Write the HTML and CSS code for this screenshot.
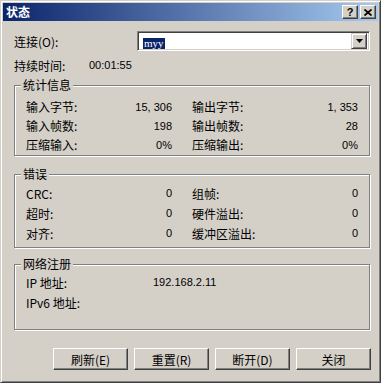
FILE: index.html
```html
<!DOCTYPE html>
<html>
<head lang="zh">
    <meta charset="UTF-8">
    <title>状态</title>
    <link rel="stylesheet" href="styles.css">
</head>
<body>
<div class="dialog">
    <div class="titlebar">
        <span class="title">状态</span>
        <div class="caption-btns">
            <span class="cap-btn help">?</span>
            <span class="cap-btn close">
                <svg width="8" height="7" viewBox="0 0 8 7">
                    <path d="M0.5 0.5 L7.5 6.5 M7.5 0.5 L0.5 6.5" stroke="#000" stroke-width="1.7" fill="none"/>
                </svg>
            </span>
        </div>
    </div>

    <div class="content">
        <div class="conn-row">
            <span class="conn-label">连接(O):</span>
            <div class="combo">
                <span class="combo-text"><span class="sel">myy</span></span>
                <span class="combo-btn">
                    <svg width="7" height="4" viewBox="0 0 7 4"><polygon points="0,0 7,0 3.5,4" fill="#000"/></svg>
                </span>
            </div>
        </div>

        <div class="dur-row">
            <span class="dur-label">持续时间:</span>
            <span class="num">00:01:55</span>
        </div>

        <!-- 统计信息 -->
        <fieldset class="group stats">
            <legend>统计信息</legend>
            <div class="grid">
                <div class="cell"><span>输入字节:</span><span class="num">15, 306</span></div>
                <div class="cell"><span>输出字节:</span><span class="num">1, 353</span></div>
                <div class="cell"><span>输入帧数:</span><span class="num">198</span></div>
                <div class="cell"><span>输出帧数:</span><span class="num">28</span></div>
                <div class="cell"><span>压缩输入:</span><span class="num">0%</span></div>
                <div class="cell"><span>压缩输出:</span><span class="num">0%</span></div>
            </div>
        </fieldset>

        <!-- 错误 -->
        <fieldset class="group errors">
            <legend>错误</legend>
            <div class="grid">
                <div class="cell"><span>CRC:</span><span class="num">0</span></div>
                <div class="cell"><span>组帧:</span><span class="num">0</span></div>
                <div class="cell"><span>超时:</span><span class="num">0</span></div>
                <div class="cell"><span>硬件溢出:</span><span class="num">0</span></div>
                <div class="cell"><span>对齐:</span><span class="num">0</span></div>
                <div class="cell"><span>缓冲区溢出:</span><span class="num">0</span></div>
            </div>
        </fieldset>

        <!-- 网络注册 -->
        <fieldset class="group net">
            <legend>网络注册</legend>
            <div class="net-grid">
                <span>IP 地址:</span><span class="num">192.168.2.11</span>
                <span>IPv6 地址:</span><span></span>
            </div>
        </fieldset>

        <div class="buttons">
            <button class="btn">刷新(E)</button>
            <button class="btn">重置(R)</button>
            <button class="btn">断开(D)</button>
            <button class="btn">关闭</button>
        </div>
    </div>
</div>
</body>
</html>
```

FILE: styles.css
```css
* {
    margin: 0;
    padding: 0;
}

body {
    background: #d4d0c8;
    font-family: "Noto Sans CJK SC", "Liberation Sans", sans-serif;
    font-size: 12px;
    color: #000;
}

.dialog {
    width: 381px;
    height: 383px;
    box-sizing: border-box;
    padding: 2px;
    background: #d4d0c8;
    border: 1px solid;
    border-color: #d4d0c8 #404040 #404040 #d4d0c8;
    box-shadow: inset 1px 1px #fff, inset -1px -1px #808080;
}

/* 标题栏 */
.titlebar {
    height: 18px;
    display: flex;
    align-items: center;
    justify-content: space-between;
    padding: 0 2px 0 3px;
    background: linear-gradient(to right, #0a246a, #a6caf0);
}

.title {
    color: #fff;
    font-weight: bold;
    line-height: 18px;
}

.caption-btns {
    display: flex;
    gap: 2px;
}

.cap-btn {
    width: 16px;
    height: 14px;
    box-sizing: border-box;
    display: flex;
    align-items: center;
    justify-content: center;
    background: #d4d0c8;
    border: 1px solid;
    border-color: #fff #404040 #404040 #fff;
    box-shadow: inset -1px -1px #808080;
}

.help {
    font-family: "Liberation Sans", sans-serif;
    font-weight: bold;
    font-size: 11px;
    line-height: 12px;
}

/* 内容 */
.content {
    padding: 0 8px 0 11px;
}

.conn-row {
    display: flex;
    align-items: center;
    margin-top: 10px;
    height: 20px;
}

.conn-label {
    width: 123px;
}

.combo {
    width: 233px;
    height: 20px;
    box-sizing: border-box;
    display: flex;
    align-items: center;
    justify-content: space-between;
    background: #fff;
    border: 1px solid;
    border-color: #808080 #fff #fff #808080;
    box-shadow: inset 1px 1px #404040, inset -1px -1px #d4d0c8;
    padding: 0 2px 0 5px;
}

.sel {
    background: #0a246a;
    color: #fff;
    font-family: "Liberation Serif", serif;
    font-size: 11px;
    padding: 0 1px;
    line-height: 11px;
    display: inline-block;
}

.combo-btn {
    width: 16px;
    height: 16px;
    box-sizing: border-box;
    display: flex;
    align-items: center;
    justify-content: center;
    background: #d4d0c8;
    border: 1px solid;
    border-color: #d4d0c8 #404040 #404040 #d4d0c8;
    box-shadow: inset 1px 1px #fff, inset -1px -1px #808080;
}

.dur-row {
    display: flex;
    align-items: center;
    height: 14px;
    margin-top: 7px;
}

.dur-label {
    width: 75px;
}

.num {
    font-family: "Liberation Sans", sans-serif;
    font-size: 11px;
}

/* 分组框 */
.group {
    margin: 0;
    min-width: 0;
    border: 1px solid #808080;
    box-shadow: inset 1px 1px #fff, 1px 1px #fff;
    padding: 5px 11px 1px;
}

.group legend {
    margin-left: -5px;
    padding: 0 2px;
    line-height: 14px;
    background: #d4d0c8;
}

.stats {
    margin-top: 6px;
}

.errors {
    margin-top: 11px;
    padding-top: 2px;
    padding-bottom: 4px;
}

.net {
    margin-top: 9px;
    padding-top: 1px;
    padding-bottom: 17px;
}

.grid {
    display: grid;
    grid-template-columns: 146px 166px;
    column-gap: 20px;
}

.cell {
    display: flex;
    justify-content: space-between;
    align-items: center;
    height: 19px;
}

.errors .cell {
    height: 20px;
}

.net-grid {
    display: grid;
    grid-template-columns: 127px auto;
    grid-auto-rows: 20px;
    align-items: center;
}

/* 按钮 */
.buttons {
    display: flex;
    justify-content: flex-end;
    gap: 6px;
    margin-top: 18px;
    margin-right: -1px;
}

.btn {
    width: 75px;
    height: 22px;
    box-sizing: border-box;
    background: #d4d0c8;
    font-family: "Noto Sans CJK SC", "Liberation Sans", sans-serif;
    font-size: 12px;
    color: #000;
    border: 1px solid;
    border-color: #fff #404040 #404040 #fff;
    box-shadow: inset -1px -1px #808080;
}
```
